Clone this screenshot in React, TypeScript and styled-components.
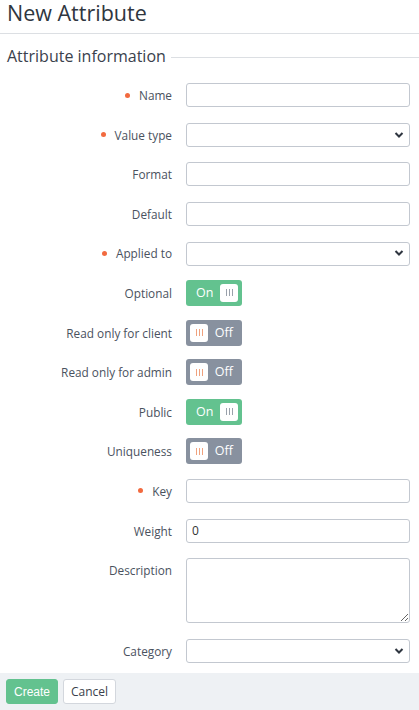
import React from "react";
import styled, { createGlobalStyle } from "styled-components";

const Global = createGlobalStyle`
  html, body { margin: 0; padding: 0; background: #fff; }
  body { font-family: "Open Sans", "Noto Sans", sans-serif; color: #333; width: 419px; height: 710px; overflow: hidden; }
  * { box-sizing: border-box; }
`;

const Page = styled.div`
  width: 419px;
  height: 710px;
  display: flex;
  flex-direction: column;
`;

const Title = styled.h1`
  margin: 0;
  padding: 0 0 0 7px;
  height: 34px;
  border-bottom: 1px solid #dcdfe3;
  font-size: 21.5px;
  font-weight: 400;
  line-height: 26px;
  color: #2f3640;
`;

const Section = styled.div`
  flex: 1;
  padding: 10px 0 0 0;
`;

const Legend = styled.div`
  display: flex;
  align-items: center;
  gap: 5px;
  padding-left: 7px;
  font-size: 16px;
  color: #3a414c;
  line-height: 24px;
  &::after {
    content: "";
    flex: 1;
    height: 1px;
    background: #dcdfe3;
    margin-top: 2px;
  }
`;

const Form = styled.div`
  display: flex;
  flex-direction: column;
  gap: 15.6px;
  padding: 15px 9px 0 0;
`;

const Row = styled.div<{ $top?: boolean }>`
  display: grid;
  grid-template-columns: 172px 224px;
  column-gap: 14px;
  align-items: ${(p) => (p.$top ? "start" : "center")};
  min-height: 24px;
`;

const Label = styled.label<{ $top?: boolean }>`
  display: flex;
  justify-content: flex-end;
  align-items: center;
  gap: 9px;
  font-size: 11.8px;
  color: #4a525e;
  line-height: 16px;
  padding-top: ${(p) => (p.$top ? "4px" : "0")};
`;

const Dot = styled.span`
  width: 5px;
  height: 5px;
  border-radius: 50%;
  background: #f26a3f;
`;

const Input = styled.input`
  width: 224px;
  height: 24px;
  border: 1px solid #c3c8d0;
  border-radius: 3px;
  padding: 0 5px;
  font-family: "Open Sans", sans-serif;
  font-size: 12px;
  color: #333;
  outline: none;
`;

const TextArea = styled.textarea`
  width: 224px;
  height: 65px;
  border: 1px solid #c3c8d0;
  border-radius: 3px;
  padding: 4px 5px;
  font-family: "Open Sans", sans-serif;
  font-size: 12px;
  resize: both;
  outline: none;
  display: block;
`;

const SelectWrap = styled.div`
  position: relative;
  width: 224px;
  height: 24px;
`;

const Select = styled.select`
  appearance: none;
  -webkit-appearance: none;
  width: 224px;
  height: 24px;
  border: 1px solid #c3c8d0;
  border-radius: 3px;
  background: #fff;
  padding: 0 5px;
  font-family: "Open Sans", sans-serif;
  font-size: 12px;
  outline: none;
`;

const Chevron = styled.svg`
  position: absolute;
  right: 6px;
  top: 8px;
  width: 10px;
  height: 8px;
  pointer-events: none;
`;

const Toggle = styled.div<{ $on: boolean }>`
  width: 56px;
  height: 26px;
  margin: -1px 0;
  border-radius: 3px;
  background: ${(p) => (p.$on ? "#63c28f" : "#88919f")};
  display: flex;
  flex-direction: ${(p) => (p.$on ? "row" : "row-reverse")};
  align-items: center;
  justify-content: space-between;
  padding-left: ${(p) => (p.$on ? "10px" : "4px")};
  padding-right: ${(p) => (p.$on ? "4px" : "9px")};
  color: #fff;
  font-size: 12.5px;
  line-height: 16px;
`;

const Knob = styled.span`
  width: 18px;
  height: 18px;
  background: #fff;
  border-radius: 3px;
  display: flex;
  align-items: center;
  justify-content: center;
  gap: 2px;
`;

const Grip = styled.span<{ $on: boolean }>`
  width: 1px;
  height: 7px;
  background: ${(p) => (p.$on ? "#9aa1ab" : "#f0a27e")};
`;

const Footer = styled.div`
  height: 37px;
  background: #eef1f4;
  display: flex;
  align-items: center;
  gap: 5px;
  padding: 0 0 0 6px;
`;

const Button = styled.button<{ $primary?: boolean }>`
  height: 25px;
  padding: 0 7px;
  border-radius: 3px;
  border: 1px solid ${(p) => (p.$primary ? "#63c28f" : "#d3d7dd")};
  background: ${(p) => (p.$primary ? "#63c28f" : "#fff")};
  color: ${(p) => (p.$primary ? "#fff" : "#3a414c")};
  font-family: ${(p) => (p.$primary ? '"Liberation Sans", Arial, sans-serif' : '"Open Sans", sans-serif')};
  font-size: 12px;
  cursor: pointer;
`;

const SelectField = () => (
  <SelectWrap>
    <Select defaultValue="">
      <option value=""></option>
    </Select>
    <Chevron viewBox="0 0 10 8">
      <path d="M1.5 2 L5 5.5 L8.5 2" fill="none" stroke="#2f3640" strokeWidth="2" />
    </Chevron>
  </SelectWrap>
);

const Switch = ({ on }: { on: boolean }) => (
  <Toggle $on={on}>
    <span>{on ? "On" : "Off"}</span>
    <Knob>
      <Grip $on={on} />
      <Grip $on={on} />
      <Grip $on={on} />
    </Knob>
  </Toggle>
);

type Field =
  | { label: string; req?: boolean; kind: "input"; value?: string }
  | { label: string; req?: boolean; kind: "select" }
  | { label: string; req?: boolean; kind: "toggle"; on: boolean }
  | { label: string; req?: boolean; kind: "textarea" };

const fields: Field[] = [
  { label: "Name", req: true, kind: "input" },
  { label: "Value type", req: true, kind: "select" },
  { label: "Format", kind: "input" },
  { label: "Default", kind: "input" },
  { label: "Applied to", req: true, kind: "select" },
  { label: "Optional", kind: "toggle", on: true },
  { label: "Read only for client", kind: "toggle", on: false },
  { label: "Read only for admin", kind: "toggle", on: false },
  { label: "Public", kind: "toggle", on: true },
  { label: "Uniqueness", kind: "toggle", on: false },
  { label: "Key", req: true, kind: "input" },
  { label: "Weight", kind: "input", value: "0" },
  { label: "Description", kind: "textarea" },
  { label: "Category", kind: "select" },
];

export default function App() {
  return (
    <Page>
      <Global />
      <Title>New Attribute</Title>
      <Section>
        <Legend>Attribute information</Legend>
        <Form>
          {fields.map((f) => {
            const top = f.kind === "textarea";
            return (
              <Row key={f.label} $top={top}>
                <Label $top={top}>
                  {f.req && <Dot />}
                  {f.label}
                </Label>
                {f.kind === "input" && <Input defaultValue={f.value ?? ""} />}
                {f.kind === "select" && <SelectField />}
                {f.kind === "toggle" && <Switch on={f.on} />}
                {f.kind === "textarea" && <TextArea />}
              </Row>
            );
          })}
        </Form>
      </Section>
      <Footer>
        <Button $primary>Create</Button>
        <Button>Cancel</Button>
      </Footer>
    </Page>
  );
}
